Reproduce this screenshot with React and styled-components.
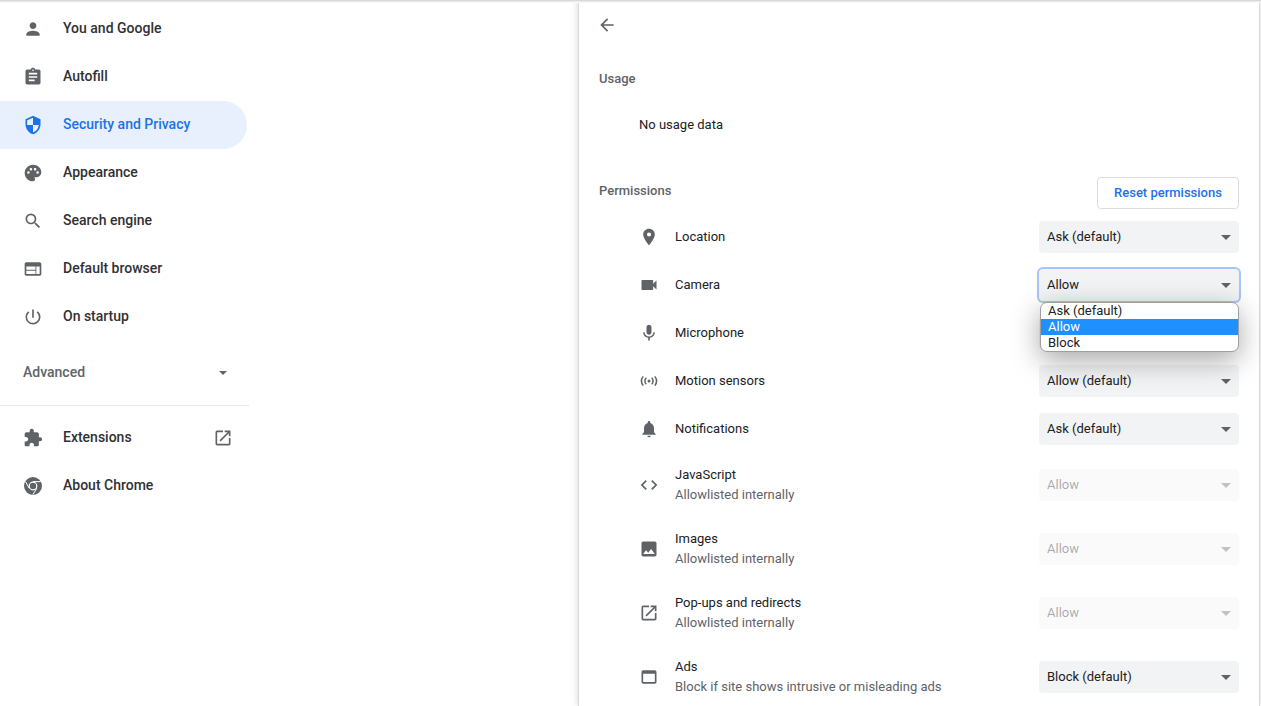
import React from "react"
import styled, { createGlobalStyle } from "styled-components"
import {
  MdPerson, MdAssignment, MdSecurity, MdPalette, MdSearch, MdWeb, MdPowerSettingsNew,
  MdExtension, MdOpenInNew, MdArrowBack, MdLocationOn, MdVideocam, MdMic, MdNotifications,
  MdCode, MdImage, MdWebAsset,
} from "react-icons/md"

const GlobalStyle = createGlobalStyle`
  html, body {
    margin: 0;
    padding: 0;
    height: 100%;
    overflow: hidden;
    background: #fff;
  }
  body {
    font-family: Roboto, "Liberation Sans", sans-serif;
    font-size: 13px;
    color: #202124;
  }
`

const ChromeIcon = () => (
  <svg width="20" height="20" viewBox="0 0 20 20">
    <circle cx="10" cy="10" r="9" fill="#5f6368" />
    <circle cx="10" cy="10" r="4.4" fill="#fff" />
    <circle cx="10" cy="10" r="3.2" fill="#5f6368" />
    <path d="M10 5.6h7.6M6.2 12.2 2.6 5.8M13.8 12.2 9.8 18.8" stroke="#fff" strokeWidth="1" fill="none" />
  </svg>
)

const MotionIcon = () => (
  <svg width="20" height="20" viewBox="0 0 20 20" fill="none" stroke="#5f6368" strokeWidth="1.5">
    <circle cx="10" cy="10" r="1.5" fill="#5f6368" stroke="none" />
    <path d="M7.3 6.7a4.6 4.6 0 0 0 0 6.6M12.7 6.7a4.6 4.6 0 0 1 0 6.6" />
    <path d="M4.2 5.4a7.5 7.5 0 0 0 0 9.2M15.8 5.4a7.5 7.5 0 0 1 0 9.2" />
  </svg>
)

const navItems = [
  { label: "You and Google", icon: MdPerson },
  { label: "Autofill", icon: MdAssignment },
  { label: "Security and Privacy", icon: MdSecurity, active: true },
  { label: "Appearance", icon: MdPalette },
  { label: "Search engine", icon: MdSearch },
  { label: "Default browser", icon: MdWeb },
  { label: "On startup", icon: MdPowerSettingsNew },
]

// the microphone select sits fully under the open popup, so it shows no value
const simpleRows = [
  { label: "Location", icon: <MdLocationOn />, value: "Ask (default)" },
  { label: "Camera", icon: <MdVideocam />, value: "Allow", open: true },
  { label: "Microphone", icon: <MdMic />, value: "" },
  { label: "Motion sensors", icon: <MotionIcon />, value: "Allow (default)" },
  { label: "Notifications", icon: <MdNotifications />, value: "Ask (default)" },
]

const tallRows = [
  { label: "JavaScript", sub: "Allowlisted internally", icon: <MdCode />, value: "Allow", disabled: true },
  { label: "Images", sub: "Allowlisted internally", icon: <MdImage />, value: "Allow", disabled: true },
  { label: "Pop-ups and redirects", sub: "Allowlisted internally", icon: <MdOpenInNew />, value: "Allow", disabled: true },
  { label: "Ads", sub: "Block if site shows intrusive or misleading ads", icon: <MdWebAsset />, value: "Block (default)" },
]

const PermissionSelect = ({ value, open, disabled }) => (
  <Select $open={open} $disabled={disabled}>
    <span>{value}</span>
    <Arrow />
    {open && (
      <Popup>
        <PopupOption>Ask (default)</PopupOption>
        <PopupOption $selected>Allow</PopupOption>
        <PopupOption>Block</PopupOption>
      </Popup>
    )}
  </Select>
)

export default function App() {
  return (
    <Page>
      <GlobalStyle />
      <TopShade />
      <Sidebar>
        {navItems.map(({ label, icon: Icon, active }) => (
          <NavItem key={label} $active={active}>
            <NavIcon $active={active}><Icon /></NavIcon>
            {label}
          </NavItem>
        ))}
        <AdvancedRow>
          Advanced
          <Arrow $small />
        </AdvancedRow>
        <Divider />
        <NavItem>
          <NavIcon><MdExtension /></NavIcon>
          Extensions
          <ExternalIcon><MdOpenInNew /></ExternalIcon>
        </NavItem>
        <NavItem>
          <NavIcon><ChromeIcon /></NavIcon>
          About Chrome
        </NavItem>
      </Sidebar>
      <Card>
        <BackRow><MdArrowBack /></BackRow>
        <SectionTitle>Usage</SectionTitle>
        <UsageText>No usage data</UsageText>
        <PermissionsHeader>
          <SectionTitle>Permissions</SectionTitle>
          <ResetButton>Reset permissions</ResetButton>
        </PermissionsHeader>
        {simpleRows.map((row) => (
          <PermissionRow key={row.label}>
            <RowIcon>{row.icon}</RowIcon>
            <RowText>{row.label}</RowText>
            <PermissionSelect value={row.value} open={row.open} />
          </PermissionRow>
        ))}
        {tallRows.map((row) => (
          <PermissionRow key={row.label} $tall>
            <RowIcon>{row.icon}</RowIcon>
            <RowText>
              {row.label}
              <SubText>{row.sub}</SubText>
            </RowText>
            <PermissionSelect value={row.value} disabled={row.disabled} />
          </PermissionRow>
        ))}
      </Card>
    </Page>
  )
}

const Page = styled.div`
  display: grid;
  grid-template-columns: 579px 680px;
  height: 706px;
  overflow: hidden;
  background: #fff;
`

const TopShade = styled.div`
  position: absolute;
  top: 0;
  left: 0;
  right: 0;
  height: 3px;
  z-index: 3;
  background: linear-gradient(#cfd0d1, #f0f0f1 60%, #fff);
`

const Sidebar = styled.nav`
  display: flex;
  flex-direction: column;
  padding-top: 5px;
`

const NavItem = styled.div`
  display: flex;
  align-items: center;
  flex: none;
  box-sizing: border-box;
  width: 247px;
  height: 48px;
  padding: 0 0 2px 23px;
  font-size: 14px;
  font-weight: 500;
  color: ${(p) => (p.$active ? "#1a73e8" : "#303134")};
  background: ${(p) => (p.$active ? "#e8f0fe" : "transparent")};
  border-radius: 0 24px 24px 0;
`

const NavIcon = styled.span`
  display: flex;
  align-items: center;
  justify-content: center;
  width: 20px;
  height: 20px;
  margin: 2px 20px 0 0;
  font-size: 20px;
  color: ${(p) => (p.$active ? "#1a73e8" : "#5f6368")};
`

const ExternalIcon = styled.span`
  display: flex;
  margin: 2px 14px 0 auto;
  font-size: 20px;
  color: #5f6368;
`

const AdvancedRow = styled.div`
  display: flex;
  align-items: center;
  justify-content: space-between;
  box-sizing: border-box;
  width: 249px;
  height: 48px;
  margin-top: 7px;
  padding: 0 22px 0 23px;
  font-size: 14px;
  font-weight: 500;
  color: #5f6368;
`

const Divider = styled.div`
  width: 249px;
  height: 1px;
  margin: 9px 0 8px;
  background: #e4e5e7;
`

const Card = styled.main`
  box-sizing: border-box;
  height: 706px;
  padding: 0 20px;
  background: #fff;
  border-left: 1px solid #d9dadb;
  border-right: 1px solid #d9dadb;
  margin-left: -1px;
  margin-right: -1px;
  box-shadow: 0 0 7px rgba(60, 64, 67, 0.22);
`

const BackRow = styled.div`
  display: flex;
  align-items: center;
  height: 50px;
  margin-bottom: 8px;
  font-size: 20px;
  margin-left: -2px;
  color: #5f6368;
`

const SectionTitle = styled.h2`
  display: flex;
  align-items: center;
  height: 40px;
  margin: 0;
  font-size: 13px;
  font-weight: 500;
  color: #5f6368;
`

const UsageText = styled.div`
  display: flex;
  align-items: center;
  height: 48px;
  margin-top: 2px;
  padding-left: 40px;
`

const PermissionsHeader = styled.div`
  display: flex;
  justify-content: space-between;
  height: 43px;
  margin-top: 22px;
`

const ResetButton = styled.button`
  box-sizing: border-box;
  width: 142px;
  height: 32px;
  margin-top: 7px;
  padding: 0 0 2px;
  font: 500 13px Roboto, "Liberation Sans", sans-serif;
  color: #1a73e8;
  background: #fff;
  border: 1px solid #dadce0;
  border-radius: 4px;
`

const PermissionRow = styled.div`
  display: flex;
  align-items: center;
  height: ${(p) => (p.$tall ? "64px" : "48px")};
  padding-left: 38px;
`

const RowIcon = styled.span`
  display: flex;
  align-items: center;
  justify-content: center;
  width: 24px;
  height: 24px;
  margin-right: 14px;
  font-size: 20px;
  color: #5f6368;
`

const RowText = styled.div`
  flex: 1;
  line-height: 20px;
`

const SubText = styled.div`
  color: #5f6368;
`

const Select = styled.div`
  position: relative;
  display: flex;
  align-items: center;
  justify-content: space-between;
  box-sizing: border-box;
  width: 200px;
  height: 32px;
  padding: 0 8px 2px;
  color: ${(p) => (p.$disabled ? "rgba(32, 33, 36, 0.38)" : "#202124")};
  background: ${(p) => (p.$disabled ? "rgba(241, 243, 244, 0.38)" : "#f1f3f4")};
  border-radius: 4px;
  box-shadow: ${(p) => (p.$open ? "0 0 0 2px #a6c6f8" : "none")};

  & > i {
    opacity: ${(p) => (p.$disabled ? 0.38 : 1)};
  }
`

const Arrow = styled.i`
  flex: none;
  width: 0;
  height: 0;
  margin-top: 2px;
  border-left: ${(p) => (p.$small ? 4 : 5)}px solid transparent;
  border-right: ${(p) => (p.$small ? 4 : 5)}px solid transparent;
  border-top: ${(p) => (p.$small ? 4 : 5)}px solid #5f6368;
`

const Popup = styled.div`
  position: absolute;
  z-index: 2;
  top: 33px;
  left: 1px;
  box-sizing: border-box;
  width: 199px;
  overflow: hidden;
  color: #202124;
  background: #fff;
  border: 1px solid #9e9e9e;
  border-radius: 7px;
  box-shadow: 0 8px 28px rgba(0, 0, 0, 0.35);
`

const PopupOption = styled.div`
  height: 16px;
  padding-left: 7px;
  line-height: 15px;
  color: ${(p) => (p.$selected ? "#fff" : "#202124")};
  background: ${(p) => (p.$selected ? "#1e90ff" : "transparent")};
`
